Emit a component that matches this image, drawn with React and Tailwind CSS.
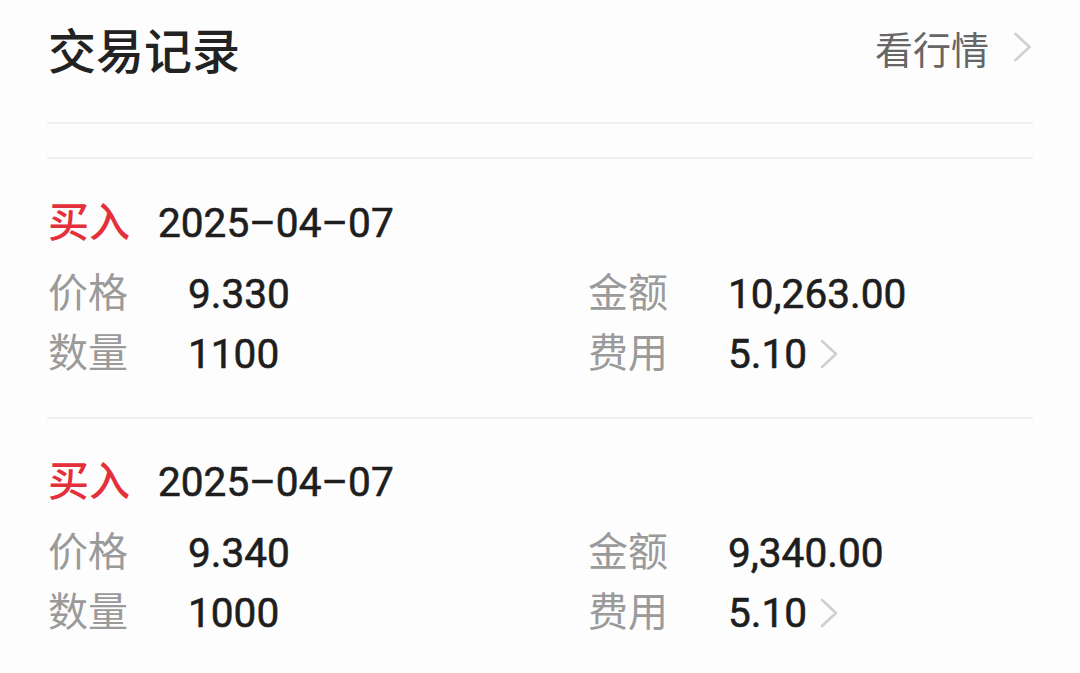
import { Fragment } from 'react'

const records = [
  { side: '买入', date: '2025–04–07', price: '9.330', amount: '10,263.00', qty: '1100', fee: '5.10' },
  { side: '买入', date: '2025–04–07', price: '9.340', amount: '9,340.00', qty: '1000', fee: '5.10' },
]

const cjk = { fontFamily: '"Noto Sans CJK SC", sans-serif' }
const num = { fontFamily: 'Roboto, "Noto Sans CJK SC", sans-serif' }

function Chevron({ className }) {
  return (
    <svg viewBox="0 0 18 30" className={className} fill="none">
      <polyline points="2,2 16,15 2,28" stroke="#cfcfcf" strokeWidth="2.6" strokeLinecap="round" strokeLinejoin="round" />
    </svg>
  )
}

function Cell({ label, value, arrow }) {
  return (
    <div className="flex items-center h-[60px] pl-[48px]">
      <span className="w-[140px] text-[40px] text-[#9a9a9a] leading-none mb-[8px]" style={cjk}>{label}</span>
      <span className="text-[40.6px] text-[#1e1e1e] leading-none [-webkit-text-stroke:0.6px_#1e1e1e]" style={num}>{value}</span>
      {arrow && <Chevron className="w-[18px] h-[30px] ml-[13px]" />}
    </div>
  )
}

export default function App() {
  return (
    <div className="w-[1080px] h-[673px] bg-[#fdfdfd] overflow-hidden">
      <div className="flex items-center justify-between h-[96px] px-[48px]">
        <span className="text-[48px] font-medium text-[#222] leading-none" style={cjk}>交易记录</span>
        <div className="flex items-center">
          <span className="text-[38px] text-[#666] leading-none" style={cjk}>看行情</span>
          <Chevron className="w-[19px] h-[30px] ml-[24px] mt-[-2px]" />
        </div>
      </div>
      <div className="mx-[47px] mt-[26px] border-t-2 border-[#efefef]" />
      <div className="mx-[47px] mt-[33px] border-t-2 border-[#efefef]" />

      {records.map((r, i) => (
        <Fragment key={i}>
          {i > 0 && <div className="mx-[47px] border-t-2 border-[#efefef]" />}
          <div className={i === 0 ? 'pt-[39px] pb-[33px]' : 'pt-[38px] pb-[33px]'}>
            <div className="flex items-center h-[50px] px-[48px]">
              <span className="text-[41px] font-medium text-[#e3303b] leading-none mr-[28px] mb-[8px]" style={cjk}>{r.side}</span>
              <span className="text-[40.6px] text-[#1e1e1e] leading-none [-webkit-text-stroke:0.6px_#1e1e1e]" style={num}>{r.date}</span>
            </div>
            <div className="grid grid-cols-2 mt-[16px]">
              <Cell label="价格" value={r.price} />
              <Cell label="金额" value={r.amount} />
              <Cell label="数量" value={r.qty} />
              <Cell label="费用" value={r.fee} arrow />
            </div>
          </div>
        </Fragment>
      ))}
    </div>
  )
}
